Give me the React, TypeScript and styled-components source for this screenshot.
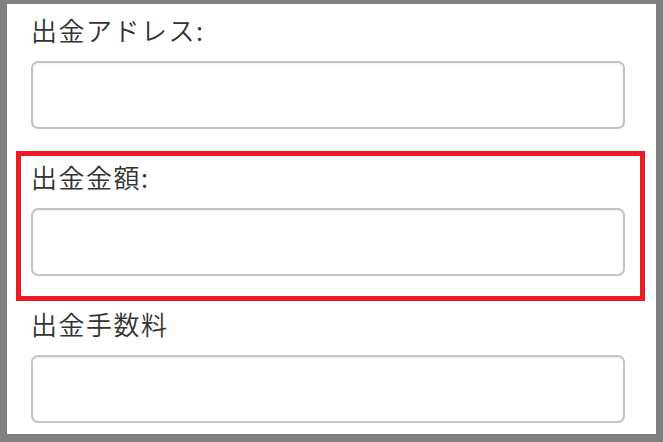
import React from "react";
import styled, { createGlobalStyle } from "styled-components";

const GlobalStyle = createGlobalStyle`
  html, body {
    margin: 0;
    padding: 0;
    background: #808080;
  }
  * {
    box-sizing: border-box;
  }
`;

// Gray frame around the white sheet
const Page = styled.div`
  width: 663px;
  height: 442px;
  padding: 4px 7px 8px 7px;
  background: #808080;
`;

const Sheet = styled.form`
  height: 430px;
  background: #fff;
  overflow: hidden;
  display: flex;
  flex-direction: column;
`;

// One label + input pair; highlighted one gets the red frame
const FieldGroup = styled.div<{ $highlighted?: boolean }>`
  display: flex;
  flex-direction: column;
  margin: 0 11px -3px 9px;
  padding: 4px 15px 20px 10px;
  border: 5px solid ${({ $highlighted }) => ($highlighted ? "#ed1c24" : "transparent")};
  position: relative;
  z-index: ${({ $highlighted }) => ($highlighted ? 1 : 0)};
`;

const Label = styled.label`
  font-family: "Noto Sans CJK JP", "Noto Sans", sans-serif;
  font-size: 26px;
  font-weight: 350;
  line-height: 34px;
  letter-spacing: 1.5px;
  color: #333;
  margin-bottom: 14px;
`;

const TextInput = styled.input`
  width: 100%;
  height: 68px;
  border: 2px solid #c3c3c3;
  border-radius: 7px;
  background: #fff;
  box-shadow: inset 0 1px 2px rgba(0, 0, 0, 0.08);
  padding: 0 12px;
  font-family: "Noto Sans CJK JP", "Noto Sans", sans-serif;
  font-size: 22px;
  outline: none;
`;

const fields = [
  { id: "address", label: "出金アドレス:" },
  { id: "amount", label: "出金金額:", highlighted: true },
  { id: "fee", label: "出金手数料" },
];

const App: React.FC = () => {
  return (
    <>
      <GlobalStyle />
      <Page>
        <Sheet onSubmit={(e) => e.preventDefault()}>
          {fields.map((f) => (
            <FieldGroup key={f.id} $highlighted={f.highlighted}>
              <Label htmlFor={f.id}>{f.label}</Label>
              <TextInput id={f.id} type="text" />
            </FieldGroup>
          ))}
        </Sheet>
      </Page>
    </>
  );
};

export default App;
